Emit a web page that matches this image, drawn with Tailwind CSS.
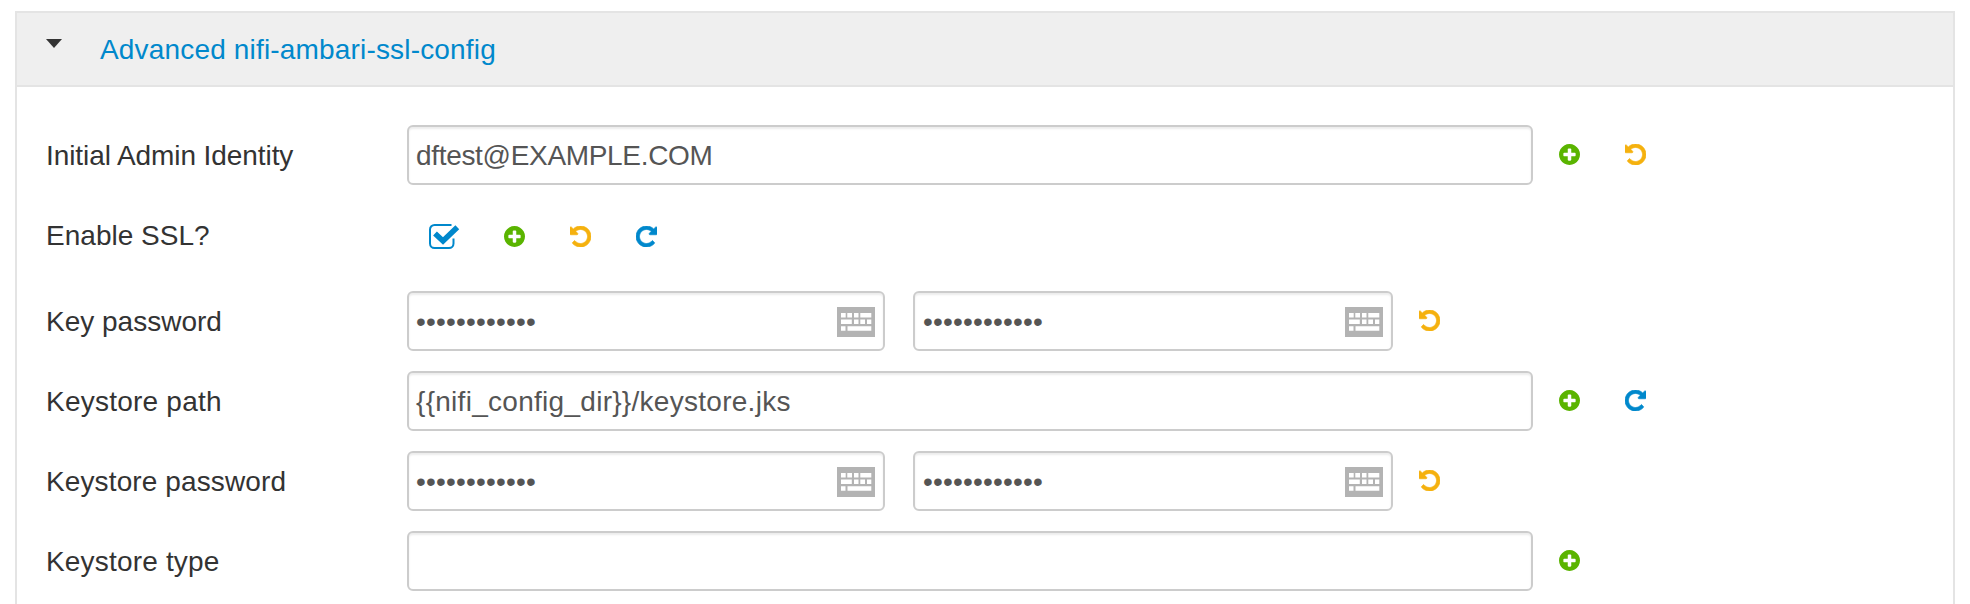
<!DOCTYPE html>
<html lang="en">
<head>
<meta charset="utf-8">
<title>Advanced nifi-ambari-ssl-config</title>
<script src="https://cdn.jsdelivr.net/npm/@tailwindcss/browser@4"></script>
</head>
<body class="bg-white font-['Liberation_Sans',Arial,sans-serif] text-[28px] leading-10 text-[#333]">
<svg class="hidden">
  <symbol id="plus" viewBox="128 128 1536 1536"><path fill="#5ab400" d="M1344 960v-128q0-26-19-45t-45-19h-256v-256q0-26-19-45t-45-19h-128q-26 0-45 19t-19 45v256h-256q-26 0-45 19t-19 45v128q0 26 19 45t45 19h256v256q0 26 19 45t45 19h128q26 0 45-19t19-45v-256h256q26 0 45-19t19-45zM1664 896q0 209-103 385.500t-279.500 279.500-385.500 103-385.500-103-279.500-279.500-103-385.500 103-385.500 279.500-279.500 385.500-103 385.500 103 279.500 279.500 103 385.500z"/></symbol>
  <symbol id="arrow" viewBox="128 128 1536 1536"><path fill="currentColor" stroke="currentColor" stroke-width="50" d="M1664 896q0 156-61 298t-164 245-245 164-298 61q-172 0-327-72.500t-264-204.500q-7-10-6.500-22.500t8.500-20.500l137-138q10-9 25-9 16 2 23 12 73 95 179 147t225 52q104 0 198.500-40.500t163.500-109.500 109.500-163.500 40.500-198.500-40.500-198.500-109.500-163.500-163.500-109.500-198.500-40.500q-98 0-188 35.500t-160 101.500l137 138q31 30 14 69-17 40-59 40h-448q-26 0-45-19t-19-45v-448q0-42 40-59 39-17 69 14l130 129q107-101 244.500-156.500t284.500-55.500q156 0 298 61t245 164 164 245 61 298z"/></symbol>
  <symbol id="keys" viewBox="0 0 38 30"><path fill="#b3b3b3" d="M0 0h38v30H0z"/><path fill="#fff" d="M4 6h4.700v4.500H4zM10.300 6H15v4.500h-4.700zM17 6h4.500v4.500H17zM23.300 6H34.300v4.500H23.300zM4 12.500h10.800V17H4zM17 12.500h4.500V17H17zM23.300 12.500H28V17h-4.700zM30 12.500h4.300V17H30zM4 19.200h4.500v4.500H4zM10.500 19.200H34.300v4.500H10.500z"/></symbol>
</svg>
<main class="mt-[11px] ml-[15px] w-[1940px] h-[593px] overflow-hidden border-2 border-b-0 border-[#e4e4e4]">
  <header class="flex h-[74px] border-b-2 border-[#e4e4e4] bg-[#efefef]">
    <svg class="mt-[26px] ml-[29px] w-4 h-[9px] shrink-0" viewBox="0 0 16 9"><path fill="#333" d="M0 0h16L8 9z"/></svg>
    <h1 class="ml-[38px] mt-[17px] tracking-[0.17px] text-[#0088cc]">Advanced nifi-ambari-ssl-config</h1>
  </header>
  <div class="pl-[29px] pt-[38px]">
    <div class="flex h-20">
      <div class="w-[361px] pt-[11px] tracking-[-0.08px]">Initial Admin Identity</div>
      <div class="w-[1126px] h-[60px] rounded-md border-2 border-[#ccc] pl-[7px] pt-[9px] tracking-[-0.32px] text-[#555] shadow-[inset_0_2px_2px_rgba(0,0,0,0.075)]">dftest@EXAMPLE.COM</div>
      <svg class="mt-[19px] ml-[26px] size-[21px]"><use href="#plus"/></svg>
      <svg class="mt-[19px] ml-[45px] size-[21px] text-[#f5b10e]"><use href="#arrow"/></svg>
    </div>
    <div class="flex h-[86px]">
      <div class="w-[361px] pt-[11px] tracking-[0.02px]">Enable SSL?</div>
      <svg class="mt-[19px] ml-[22px] w-[31px] h-[26px] text-[#0088cc]" viewBox="0 0 31 26"><path fill="none" stroke="currentColor" stroke-width="2" d="M22.500 1H5.500A4.500 4.500 0 0 0 1 5.500V19.500a4.500 4.500 0 0 0 4.500 4.500H20a4.500 4.500 0 0 0 4.500-4.500V14.500"/><path fill="none" stroke="currentColor" stroke-width="5.500" stroke-linejoin="miter" d="M6 9.500l8 7.500L28.300 3.200"/></svg>
      <svg class="mt-[21px] ml-11 size-[21px]"><use href="#plus"/></svg>
      <svg class="mt-[21px] ml-[45px] size-[21px] text-[#f5b10e]"><use href="#arrow"/></svg>
      <svg class="mt-[21px] ml-[45px] size-[21px] -scale-x-100 text-[#0088cc]"><use href="#arrow"/></svg>
    </div>
    <div class="flex h-20">
      <div class="w-[361px] pt-[11px]">Key password</div>
      <div class="flex justify-between w-[478px] h-[60px] rounded-md border-2 border-[#ccc] pl-[7px] pr-2 text-[#555] shadow-[inset_0_2px_2px_rgba(0,0,0,0.075)]"><span class="pt-[9px] tracking-[0.2px]">••••••••••••</span><svg class="mt-3.5 w-[38px] h-[30px]"><use href="#keys"/></svg></div>
      <div class="ml-7 flex justify-between w-[480px] h-[60px] rounded-md border-2 border-[#ccc] pl-2 pr-2 text-[#555] shadow-[inset_0_2px_2px_rgba(0,0,0,0.075)]"><span class="pt-[9px] tracking-[0.2px]">••••••••••••</span><svg class="mt-3.5 w-[38px] h-[30px]"><use href="#keys"/></svg></div>
      <svg class="mt-[19px] ml-[26px] size-[21px] text-[#f5b10e]"><use href="#arrow"/></svg>
    </div>
    <div class="flex h-20">
      <div class="w-[361px] pt-[11px] tracking-[0.23px]">Keystore path</div>
      <div class="w-[1126px] h-[60px] rounded-md border-2 border-[#ccc] pl-[7px] pt-[9px] tracking-[0.28px] text-[#555] shadow-[inset_0_2px_2px_rgba(0,0,0,0.075)]">{{nifi_config_dir}}/keystore.jks</div>
      <svg class="mt-[19px] ml-[26px] size-[21px]"><use href="#plus"/></svg>
      <svg class="mt-[19px] ml-[45px] size-[21px] -scale-x-100 text-[#0088cc]"><use href="#arrow"/></svg>
    </div>
    <div class="flex h-20">
      <div class="w-[361px] pt-[11px] tracking-[0.12px]">Keystore password</div>
      <div class="flex justify-between w-[478px] h-[60px] rounded-md border-2 border-[#ccc] pl-[7px] pr-2 text-[#555] shadow-[inset_0_2px_2px_rgba(0,0,0,0.075)]"><span class="pt-[9px] tracking-[0.2px]">••••••••••••</span><svg class="mt-3.5 w-[38px] h-[30px]"><use href="#keys"/></svg></div>
      <div class="ml-7 flex justify-between w-[480px] h-[60px] rounded-md border-2 border-[#ccc] pl-2 pr-2 text-[#555] shadow-[inset_0_2px_2px_rgba(0,0,0,0.075)]"><span class="pt-[9px] tracking-[0.2px]">••••••••••••</span><svg class="mt-3.5 w-[38px] h-[30px]"><use href="#keys"/></svg></div>
      <svg class="mt-[19px] ml-[26px] size-[21px] text-[#f5b10e]"><use href="#arrow"/></svg>
    </div>
    <div class="flex h-[73px]">
      <div class="w-[361px] pt-[11px] tracking-[0.18px]">Keystore type</div>
      <div class="w-[1126px] h-[60px] rounded-md border-2 border-[#ccc] shadow-[inset_0_2px_2px_rgba(0,0,0,0.075)]"></div>
      <svg class="mt-[19px] ml-[26px] size-[21px]"><use href="#plus"/></svg>
    </div>
  </div>
</main>
</body>
</html>
